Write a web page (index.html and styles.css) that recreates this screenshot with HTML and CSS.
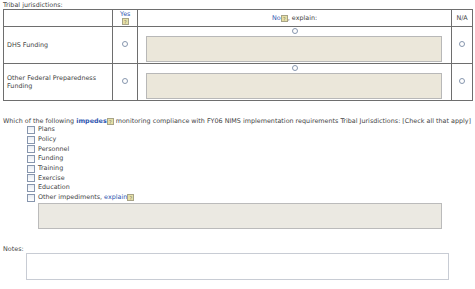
FILE: index.html
```html
<!DOCTYPE html>
<html lang="en">
<head>
  <meta charset="UTF-8" />
  <title>Tribal Jurisdictions - NIMS Compliance</title>
  <link rel="stylesheet" href="styles.css">
</head>
<body>
  <div class="page">
    <div class="section-title">Tribal jurisdictions:</div>
    <table class="grid">
      <tr class="head">
        <th class="col-label"></th>
        <th class="col-yes"><span class="link">Yes</span><br><span class="help">?</span></th>
        <th class="col-no"><span class="link">No</span><span class="help">?</span>, explain:</th>
        <th class="col-na">N/A</th>
      </tr>
      <tr class="row">
        <td class="label">DHS Funding</td>
        <td class="center"><span class="radio"></span></td>
        <td class="no-cell">
          <span class="radio"></span>
          <div class="explain-box"></div>
        </td>
        <td class="center"><span class="radio"></span></td>
      </tr>
      <tr class="row">
        <td class="label">Other Federal Preparedness Funding</td>
        <td class="center"><span class="radio"></span></td>
        <td class="no-cell">
          <span class="radio"></span>
          <div class="explain-box"></div>
        </td>
        <td class="center"><span class="radio"></span></td>
      </tr>
    </table>

    <p class="question">Which of the following <span class="link bold">impedes</span><span class="help">?</span> monitoring compliance with FY06 NIMS implementation requirements Tribal Jurisdictions: [Check all that apply]</p>
    <ul class="checks">
      <li><span class="box"></span><span>Plans</span></li>
      <li><span class="box"></span><span>Policy</span></li>
      <li><span class="box"></span><span>Personnel</span></li>
      <li><span class="box"></span><span>Funding</span></li>
      <li><span class="box"></span><span>Training</span></li>
      <li><span class="box"></span><span>Exercise</span></li>
      <li><span class="box"></span><span>Education</span></li>
      <li><span class="box"></span><span>Other impediments, <span class="link">explain</span><span class="help">?</span></span></li>
    </ul>
    <div class="other-box"></div>

    <div class="notes-label">Notes:</div>
    <div class="notes-box"></div>
  </div>
</body>
</html>
```

FILE: styles.css
```css
* { margin: 0; padding: 0; box-sizing: border-box; }
body {
  font-family: "DejaVu Sans", Verdana, sans-serif;
  font-size: 6.4px;
  color: #444;
  background: #fff;
}
.page { padding: 0 3px; }
.section-title { height: 9px; line-height: 11px; }
.link { color: #2f56b0; }
.bold { font-weight: bold; }
.help {
  display: inline-block;
  width: 7px;
  height: 7px;
  line-height: 6px;
  font-size: 5px;
  text-align: center;
  color: #776;
  background: #e6e0a6;
  border: 1px solid #a8a488;
  vertical-align: -1px;
}
.grid {
  width: 470px;
  border-collapse: collapse;
  border: 1px solid #6e6e6e;
}
.grid th, .grid td { border: 1px solid #6e6e6e; padding: 0; }
.grid th { font-weight: normal; height: 17px; }
.col-label { width: 110px; }
.col-yes { width: 25px; line-height: 7px; }
.col-no { width: 314px; }
.col-na { width: 21px; }
.row td { height: 37px; }
.row:first-of-type td { height: 36px; }
.label { padding: 0 6px 0 3px !important; line-height: 8px; }
.center { text-align: center; }
.radio {
  display: inline-block;
  width: 6px;
  height: 6px;
  border: 1px solid #8796ae;
  border-radius: 50%;
  background: #fff;
}
.no-cell { text-align: center; vertical-align: top; padding-top: 1px !important; }
.no-cell .radio { display: block; margin: 0 auto 2px; }
.explain-box {
  width: 296px;
  height: 26px;
  margin-left: 8px;
  background: #ebe7da;
  border: 1px solid #b8b8b8;
}
.question { margin-top: 16px; line-height: 8px; }
.checks { list-style: none; margin: 0 0 0 24px; }
.checks li { height: 9.7px; line-height: 9px; display: flex; align-items: center; }
.box {
  width: 8px;
  height: 8px;
  margin-right: 3px;
  border: 1px solid #8796ae;
  background: linear-gradient(#e9edf3, #fff);
}
.other-box {
  width: 404px;
  height: 26px;
  margin-left: 35px;
  background: #ebe9e2;
  border: 1px solid #bbb;
}
.notes-label { margin-top: 17px; height: 7px; line-height: 7px; }
.notes-box {
  width: 423px;
  height: 27px;
  margin-left: 23px;
  background: #fff;
  border: 1px solid #c8ccd4;
}
```
